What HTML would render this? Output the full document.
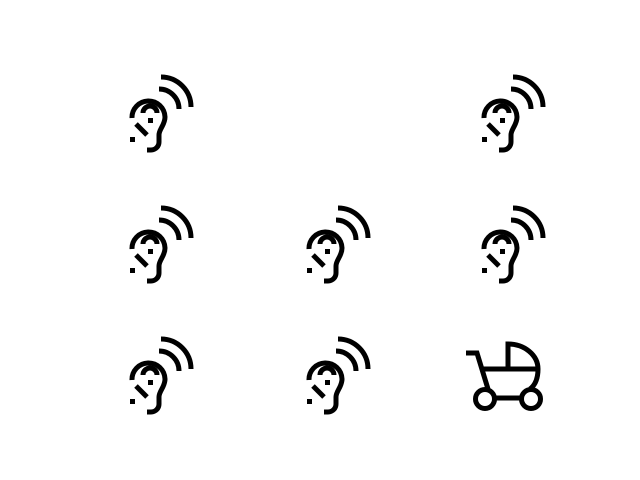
<!DOCTYPE html>
<html><head><style>html,body{margin:0;background:#fff;width:640px;height:480px;overflow:hidden}</style></head>
<body>
<svg width="640" height="480" viewBox="0 0 640 480" xmlns="http://www.w3.org/2000/svg">
<defs>
<g id="ear" fill="none" stroke="#000" stroke-width="5">
<path d="M161,77 A30,30 0 0 1 191,107"/>
<path d="M159,89 A20,20 0 0 1 179,109"/>
<path d="M132,118 A16.5,16.5 0 0 1 165,117 C165,125 159,129 159,135 L159,142 A8,8 0 0 1 151,150 L147,150"/>
<path d="M143,113 A7,7 0 0 1 157,113"/>
<path d="M136,124 L147,135"/>
<rect x="148" y="118" width="5" height="5" fill="#000" stroke="none"/>
<rect x="130" y="137" width="5" height="5" fill="#000" stroke="none"/>
</g>
</defs>
<use href="#ear"/>
<use href="#ear" x="352"/>
<use href="#ear" y="131"/>
<use href="#ear" x="177" y="131"/>
<use href="#ear" x="352" y="131"/>
<use href="#ear" y="262"/>
<use href="#ear" x="177" y="262"/>
<g fill="none" stroke="#000" stroke-width="5">
<path d="M466,353 L477,353 L488,389"/>
<path d="M481,369 L538,369"/>
<path d="M508,369 L508,344 A30,25 0 0 1 538,369 C538,380 534,386 530,389"/>
<path d="M494,398 L522,398"/>
<circle cx="485" cy="399" r="9.5"/>
<circle cx="531" cy="399" r="9.5"/>
</g>
</svg>
</body></html>
